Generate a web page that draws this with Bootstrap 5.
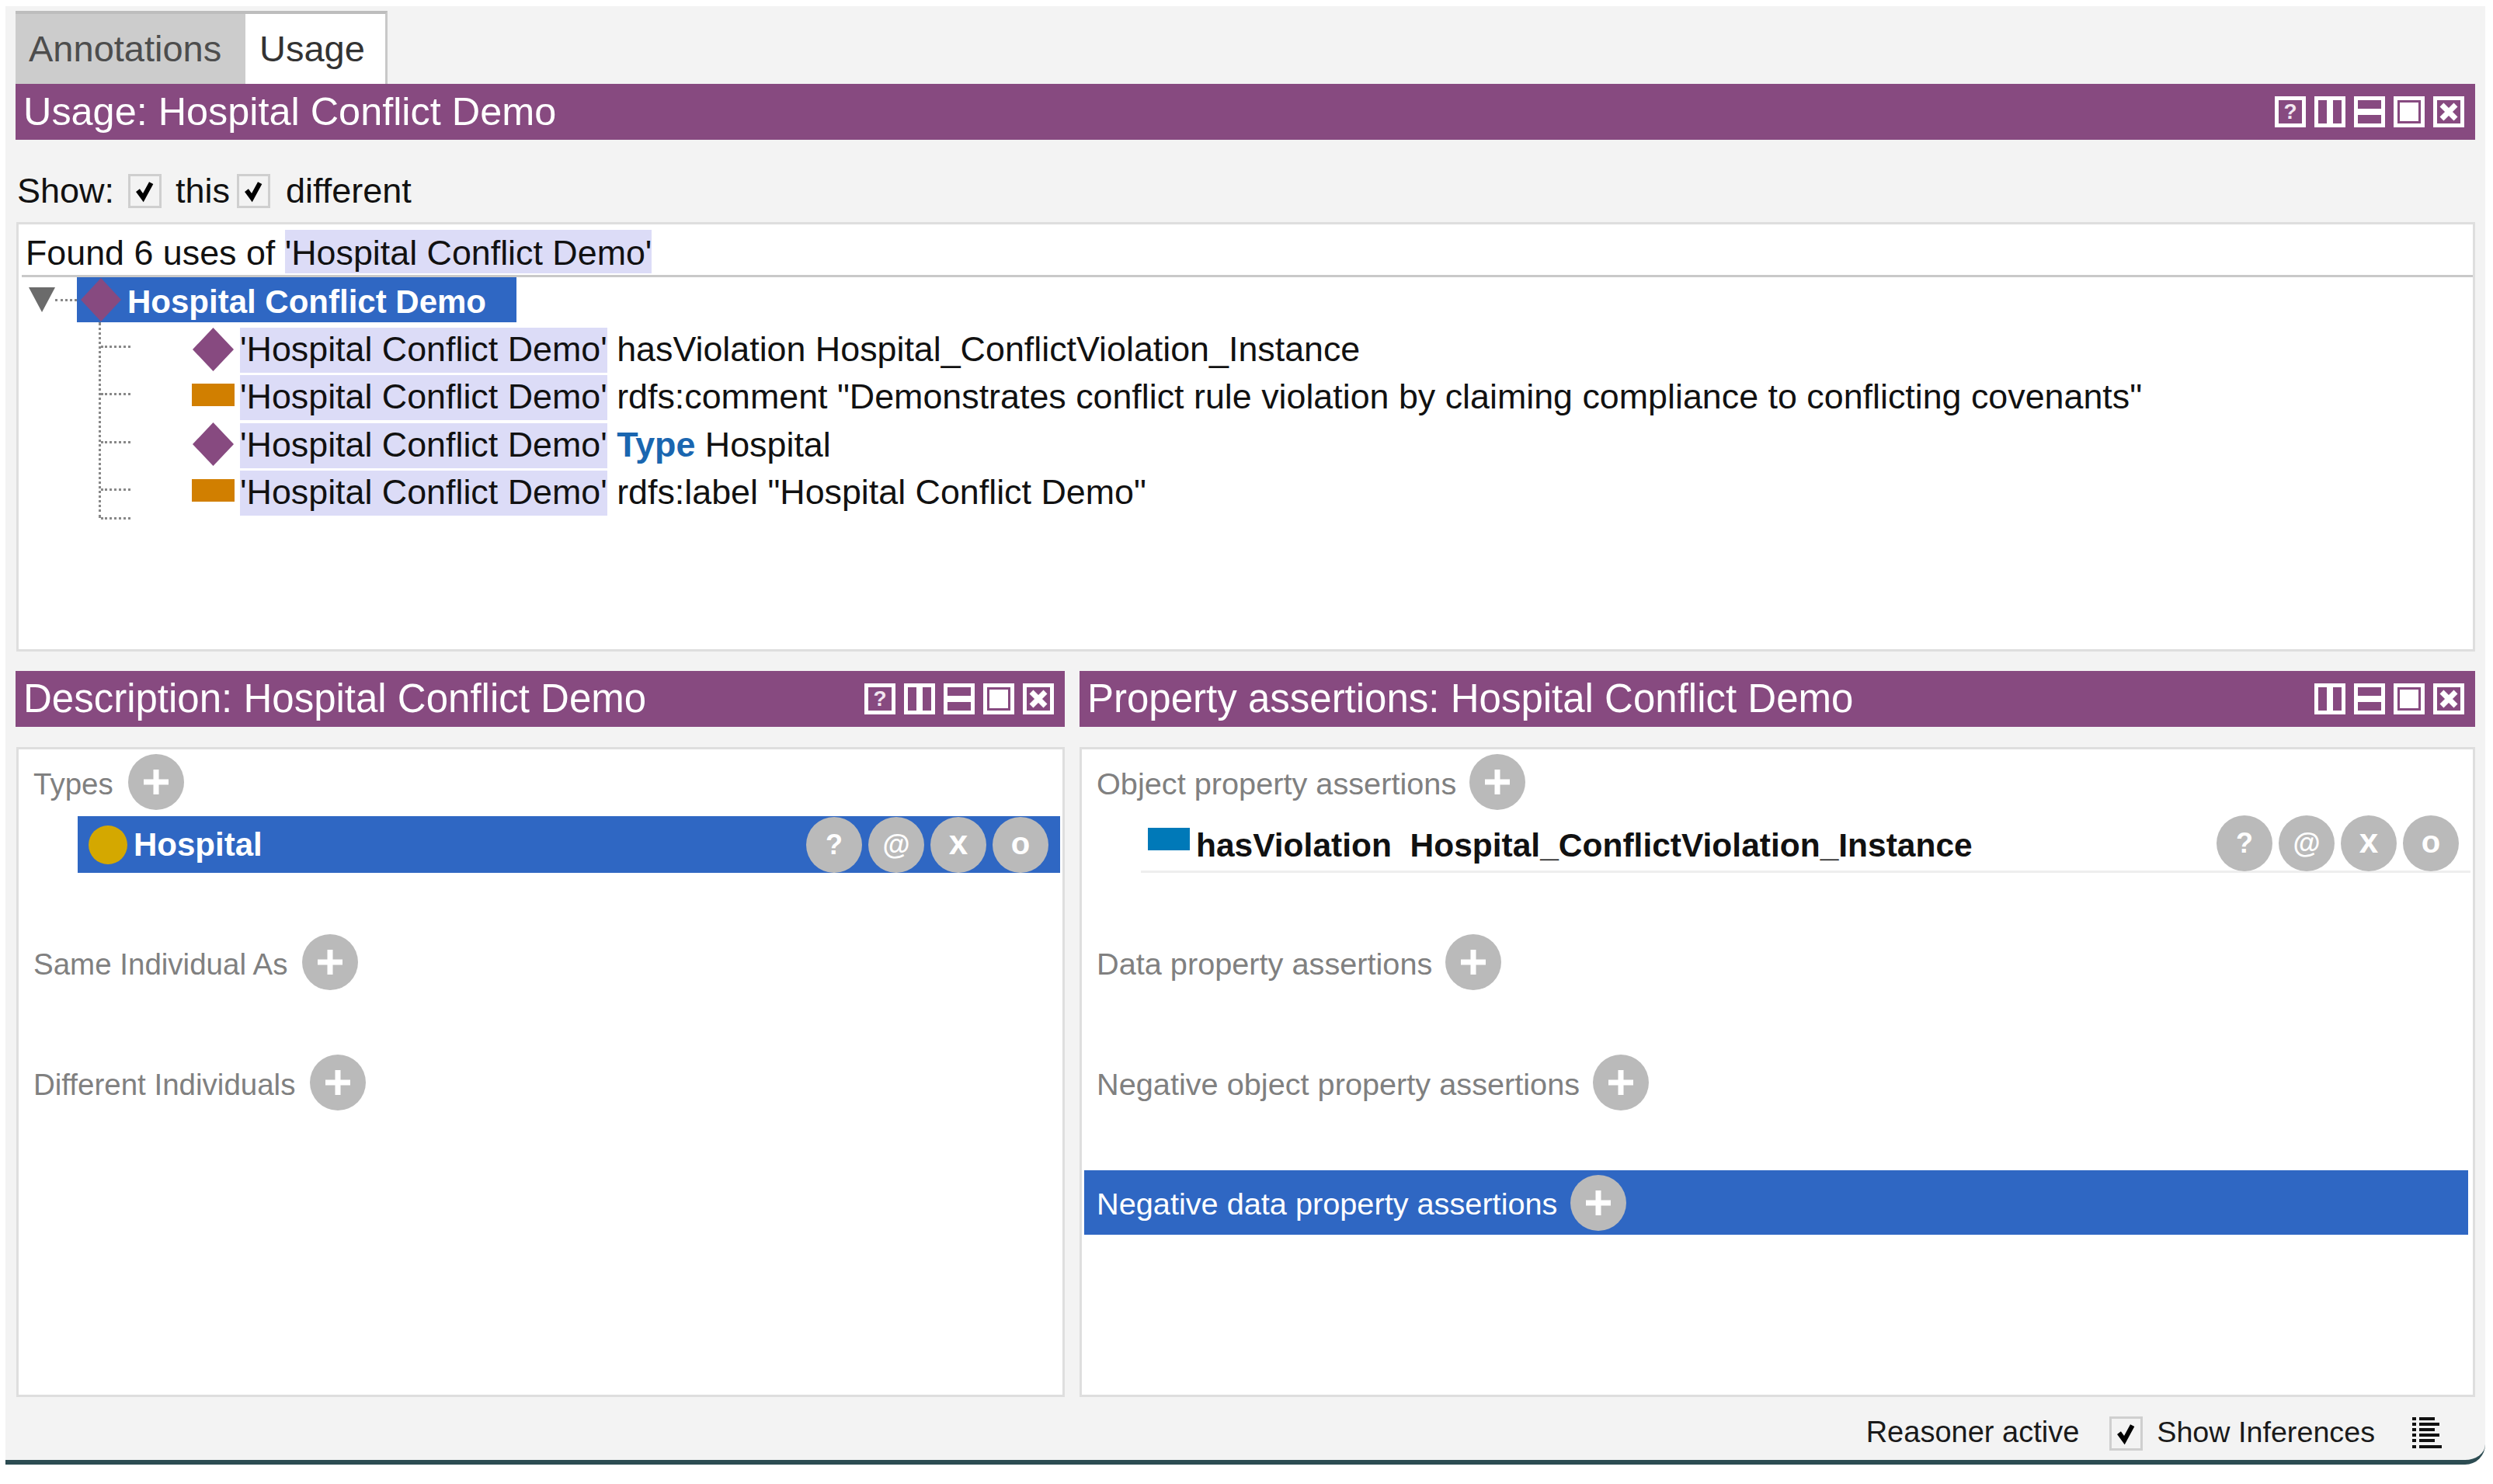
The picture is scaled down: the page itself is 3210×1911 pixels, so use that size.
<!DOCTYPE html>
<html lang="en">
<head>
<meta charset="utf-8">
<title>Usage: Hospital Conflict Demo</title>
<link rel="stylesheet" href="https://cdn.jsdelivr.net/npm/bootstrap@5.3.0/dist/css/bootstrap.min.css">
<style>
html,body{background:#fff;margin:0;}
body{font-family:"Liberation Sans",Arial,sans-serif;color:#111;overflow:hidden;}
.desk{width:3193px;height:1878px;margin:8px 0 0 7px;padding:6px 13px 0;background:#f3f3f3;border-bottom:6px solid #2c4c52;border-bottom-right-radius:26px;}
.tabstrip{height:94px;}
.tabitem{height:94px;display:flex;align-items:center;font-size:47px;padding-top:1px;border-top:4px solid #bdbdbd;}
.tab-off{width:296px;padding-left:17px;background:#cccccc;color:#4d4d4d;}
.tab-on{width:183px;padding-left:18px;background:#fff;color:#333;border-right:3px solid #c8c8c8;}
.viewbar{height:72px;background:#874a80;color:#fff;font-size:51px;padding:0 14px 0 10px;line-height:72px;}
.viewbar.topbar{font-size:50.4px;}
.winbtns{gap:11px;}
.winbtn{width:40px;height:40px;border:5px solid #fff;display:flex;align-items:center;justify-content:center;color:#f2e6f0;font-size:28px;font-weight:700;line-height:1;}
.winbtn svg{display:block;width:30px;height:30px;}
.showrow{height:106px;padding-top:44px;font-size:45px;line-height:44px;}
.showlabel{width:145px;padding-left:2px;}
.thislabel{width:79px;margin-left:18px;}
.difflabel{margin-left:20px;}
.tick{appearance:none;-webkit-appearance:none;flex:none;width:43px;height:44px;margin:0;border:3px solid #cfcfcf;background:#f3f3f3 url("data:image/svg+xml,%3Csvg xmlns='http://www.w3.org/2000/svg' viewBox='0 0 43 44'%3E%3Cpath d='M11 21l8 11 12-22' fill='none' stroke='%23000' stroke-width='7'/%3E%3C/svg%3E") center/contain no-repeat;}
.pane{background:#fff;border:3px solid #dedede;}
.usagepane{height:553px;margin-left:1px;padding:7px 0 0 4px;}
.foundline{height:61px;font-size:44.8px;line-height:58px;padding-left:5px;border-bottom:3px solid #c9c9c9;}
.hilite{display:inline-block;height:56px;line-height:58px;background:#dcdcf7;}
.treeroot{height:58px;display:flex;align-items:center;padding-left:9px;}
.twisty{width:0;height:0;border-left:17px solid transparent;border-right:17px solid transparent;border-top:32px solid #6b6b6b;}
.rootdots{width:28px;border-top:3px dotted #888;}
.rootsel{width:566px;height:58px;background:#2f67c3;color:#fff;font-size:42px;font-weight:700;display:flex;align-items:center;padding-left:5px;}
.rootsel svg{margin-right:8px;}
.roottext{padding-top:4px;}
.treekids{margin-left:99px;height:252px;padding-top:4px;border-left:3px dotted #888;}
.kid{height:61.33px;display:flex;align-items:center;font-size:44.8px;white-space:nowrap;}
.branch{flex:none;width:38px;margin-top:-6px;border-top:3px dotted #888;}
.kidicon{flex:none;width:55px;margin:0 7px 0 79px;display:flex;justify-content:center;}
.orange{width:55px;height:29px;background:#d17f00;margin-top:-5px;}
.kid .hilite{height:58px;line-height:54px;}
.typeword{color:#1a66b0;font-weight:700;}
.lastbranch{width:38px;border-top:3px dotted #888;margin-top:2px;}
.splitgrid{display:grid;grid-template-columns:1351px 1797px;column-gap:19px;margin-top:25px;}
.framecol{min-width:0;}
.framepane{height:837px;margin:26px 0 0 1px;padding:6px 3px 0 0;}
.framecol+.framecol .framepane{margin-left:0;}
.seclabel{height:72px;display:flex;align-items:center;gap:19px;font-size:38.5px;color:#808080;padding-left:19px;white-space:nowrap;}
.seclabel .labeltext{padding-top:5px;}
.framecol+.framecol .seclabel{font-size:39.7px;gap:17px;}
.seclabel.picked{height:83px;background:#2f67c3;color:#fff;margin-left:3px;margin-right:3px;padding-left:16px;}
.framepane .sec4{margin-top:77px;}
.roundbtn{flex:none;width:72px;height:72px;border-radius:50%;background:#bababa;color:#fff;display:flex;align-items:center;justify-content:center;font-weight:700;font-size:36px;line-height:1;}
.roundbtn svg{width:40px;height:40px;display:block;}
.glyphx{font-size:44px;padding-bottom:6px;}
.glypho{font-size:40px;padding-bottom:4px;}
.assert{height:73px;margin:8px 0 0 76px;display:flex;align-items:center;font-size:42.5px;font-weight:700;white-space:nowrap;}
.assert.sel{background:#2f67c3;color:#fff;font-size:42px;}
.assert.plain{border-bottom:3px solid #eee;}
.assert.plain .labeltext{padding-top:5px;}
.ballicon{margin:0 8px 0 14px;flex:none;}
.squareicon{margin:-12px 8px 0 9px;flex:none;}
.actions{margin-left:auto;gap:8px;padding-right:15px;}
.sec2{margin-top:79px;}
.sec3{margin-top:83px;}
.statusbar{height:82px;padding:23px 43px 0 0;font-size:38px;line-height:44px;color:#1a1a1a;}
.statusbar svg{display:block;margin:3px 0 0 48px;}
.statustick{margin:2px 0 0 39px;}
.statuslabel{margin-left:18px;font-size:37.7px;}
</style>
</head>
<body>
<div class="desk">
  <div class="tabstrip d-flex">
    <div class="tabitem tab-off">Annotations</div>
    <div class="tabitem tab-on">Usage</div>
  </div>

  <div class="viewbar topbar d-flex justify-content-between align-items-center">
    <span>Usage: Hospital Conflict Demo</span>
    <div class="winbtns d-flex">
      <span class="winbtn">?</span>
      <span class="winbtn"><svg viewBox="0 0 30 30"><rect x="11" width="8" height="30" fill="#fff"/></svg></span>
      <span class="winbtn"><svg viewBox="0 0 30 30"><rect y="11" width="30" height="8" fill="#fff"/></svg></span>
      <span class="winbtn"><svg viewBox="0 0 30 30"><rect x="3" y="3" width="24" height="24" fill="#fff"/></svg></span>
      <span class="winbtn"><svg viewBox="0 0 30 30"><path d="M6 6l18 18M24 6L6 24" stroke="#fff" stroke-width="7"/></svg></span>
    </div>
  </div>

  <div class="showrow d-flex align-items-start">
    <span class="showlabel">Show:</span>
    <input class="tick" type="checkbox" checked aria-label="this">
    <span class="thislabel">this</span>
    <input class="tick" type="checkbox" checked aria-label="different">
    <span class="difflabel">different</span>
  </div>

  <div class="pane usagepane">
    <div class="foundline">Found 6 uses of <span class="hilite">'Hospital Conflict Demo'</span></div>
    <div class="treeroot">
      <span class="twisty"></span><span class="rootdots"></span>
      <div class="rootsel">
        <svg width="52" height="56" viewBox="0 0 52 56"><path d="M26 0L52 28 26 56 0 28z" fill="#874a80"/></svg>
        <span class="roottext">Hospital Conflict Demo</span>
      </div>
    </div>
    <div class="treekids">
      <div class="kid"><span class="branch"></span><span class="kidicon"><svg width="55" height="58" viewBox="0 0 55 58"><path d="M27.5 1L54 29 27.500 57 1 29z" fill="#874a80"/></svg></span><span><span class="hilite">'Hospital Conflict Demo'</span> hasViolation Hospital_ConflictViolation_Instance</span></div>
      <div class="kid"><span class="branch"></span><span class="kidicon"><span class="orange"></span></span><span><span class="hilite">'Hospital Conflict Demo'</span> rdfs:comment "Demonstrates conflict rule violation by claiming compliance to conflicting covenants"</span></div>
      <div class="kid"><span class="branch"></span><span class="kidicon"><svg width="55" height="58" viewBox="0 0 55 58"><path d="M27.5 1L54 29 27.500 57 1 29z" fill="#874a80"/></svg></span><span><span class="hilite">'Hospital Conflict Demo'</span> <span class="typeword">Type</span> Hospital</span></div>
      <div class="kid"><span class="branch"></span><span class="kidicon"><span class="orange"></span></span><span><span class="hilite">'Hospital Conflict Demo'</span> rdfs:label "Hospital Conflict Demo"</span></div>
      <div class="lastbranch"></div>
    </div>
  </div>

  <div class="splitgrid">
    <div class="framecol">
      <div class="viewbar d-flex justify-content-between align-items-center">
        <span>Description: Hospital Conflict Demo</span>
        <div class="winbtns d-flex">
          <span class="winbtn">?</span>
          <span class="winbtn"><svg viewBox="0 0 30 30"><rect x="11" width="8" height="30" fill="#fff"/></svg></span>
          <span class="winbtn"><svg viewBox="0 0 30 30"><rect y="11" width="30" height="8" fill="#fff"/></svg></span>
          <span class="winbtn"><svg viewBox="0 0 30 30"><rect x="3" y="3" width="24" height="24" fill="#fff"/></svg></span>
          <span class="winbtn"><svg viewBox="0 0 30 30"><path d="M6 6l18 18M24 6L6 24" stroke="#fff" stroke-width="7"/></svg></span>
        </div>
      </div>
      <div class="pane framepane">
        <div class="seclabel"><span class="labeltext">Types</span> <span class="roundbtn"><svg viewBox="0 0 40 40"><path d="M20 4v32M4 20h32" stroke="#fff" stroke-width="7"/></svg></span></div>
        <div class="assert sel">
          <svg class="ballicon" width="50" height="50" viewBox="0 0 50 50"><circle cx="25" cy="25" r="25" fill="#d4a800"/></svg>
          <span>Hospital</span>
          <div class="actions d-flex">
            <span class="roundbtn">?</span><span class="roundbtn">@</span><span class="roundbtn glyphx">x</span><span class="roundbtn glypho">o</span>
          </div>
        </div>
        <div class="seclabel sec2"><span class="labeltext">Same Individual As</span> <span class="roundbtn"><svg viewBox="0 0 40 40"><path d="M20 4v32M4 20h32" stroke="#fff" stroke-width="7"/></svg></span></div>
        <div class="seclabel sec3"><span class="labeltext">Different Individuals</span> <span class="roundbtn"><svg viewBox="0 0 40 40"><path d="M20 4v32M4 20h32" stroke="#fff" stroke-width="7"/></svg></span></div>
      </div>
    </div>

    <div class="framecol">
      <div class="viewbar d-flex justify-content-between align-items-center">
        <span>Property assertions: Hospital Conflict Demo</span>
        <div class="winbtns d-flex">
          <span class="winbtn"><svg viewBox="0 0 30 30"><rect x="11" width="8" height="30" fill="#fff"/></svg></span>
          <span class="winbtn"><svg viewBox="0 0 30 30"><rect y="11" width="30" height="8" fill="#fff"/></svg></span>
          <span class="winbtn"><svg viewBox="0 0 30 30"><rect x="3" y="3" width="24" height="24" fill="#fff"/></svg></span>
          <span class="winbtn"><svg viewBox="0 0 30 30"><path d="M6 6l18 18M24 6L6 24" stroke="#fff" stroke-width="7"/></svg></span>
        </div>
      </div>
      <div class="pane framepane">
        <div class="seclabel"><span class="labeltext">Object property assertions</span> <span class="roundbtn"><svg viewBox="0 0 40 40"><path d="M20 4v32M4 20h32" stroke="#fff" stroke-width="7"/></svg></span></div>
        <div class="assert plain">
          <svg class="squareicon" width="54" height="29" viewBox="0 0 54 29"><rect width="54" height="29" fill="#0079b8"/></svg>
          <span class="labeltext">hasViolation&nbsp; Hospital_ConflictViolation_Instance</span>
          <div class="actions d-flex">
            <span class="roundbtn">?</span><span class="roundbtn">@</span><span class="roundbtn glyphx">x</span><span class="roundbtn glypho">o</span>
          </div>
        </div>
        <div class="seclabel sec2"><span class="labeltext">Data property assertions</span> <span class="roundbtn"><svg viewBox="0 0 40 40"><path d="M20 4v32M4 20h32" stroke="#fff" stroke-width="7"/></svg></span></div>
        <div class="seclabel sec3"><span class="labeltext">Negative object property assertions</span> <span class="roundbtn"><svg viewBox="0 0 40 40"><path d="M20 4v32M4 20h32" stroke="#fff" stroke-width="7"/></svg></span></div>
        <div class="seclabel picked sec4"><span class="labeltext">Negative data property assertions</span> <span class="roundbtn"><svg viewBox="0 0 40 40"><path d="M20 4v32M4 20h32" stroke="#fff" stroke-width="7"/></svg></span></div>
      </div>
    </div>
  </div>

  <div class="statusbar d-flex justify-content-end align-items-start">
    <span>Reasoner active</span>
    <input class="tick statustick" type="checkbox" checked aria-label="Show Inferences">
    <span class="statuslabel">Show Inferences</span>
    <svg width="38" height="40" viewBox="0 0 38 40"><path d="M0 2h5M9 2h20M0 9h5M9 9h26M0 16h5M9 16h20M0 23h5M9 23h26M0 30h5M9 30h20M0 38h5M9 38h29" stroke="#111" stroke-width="4"/></svg>
  </div>
</div>
<script src="https://cdn.jsdelivr.net/npm/bootstrap@5.3.0/dist/js/bootstrap.bundle.min.js"></script>
</body>
</html>
